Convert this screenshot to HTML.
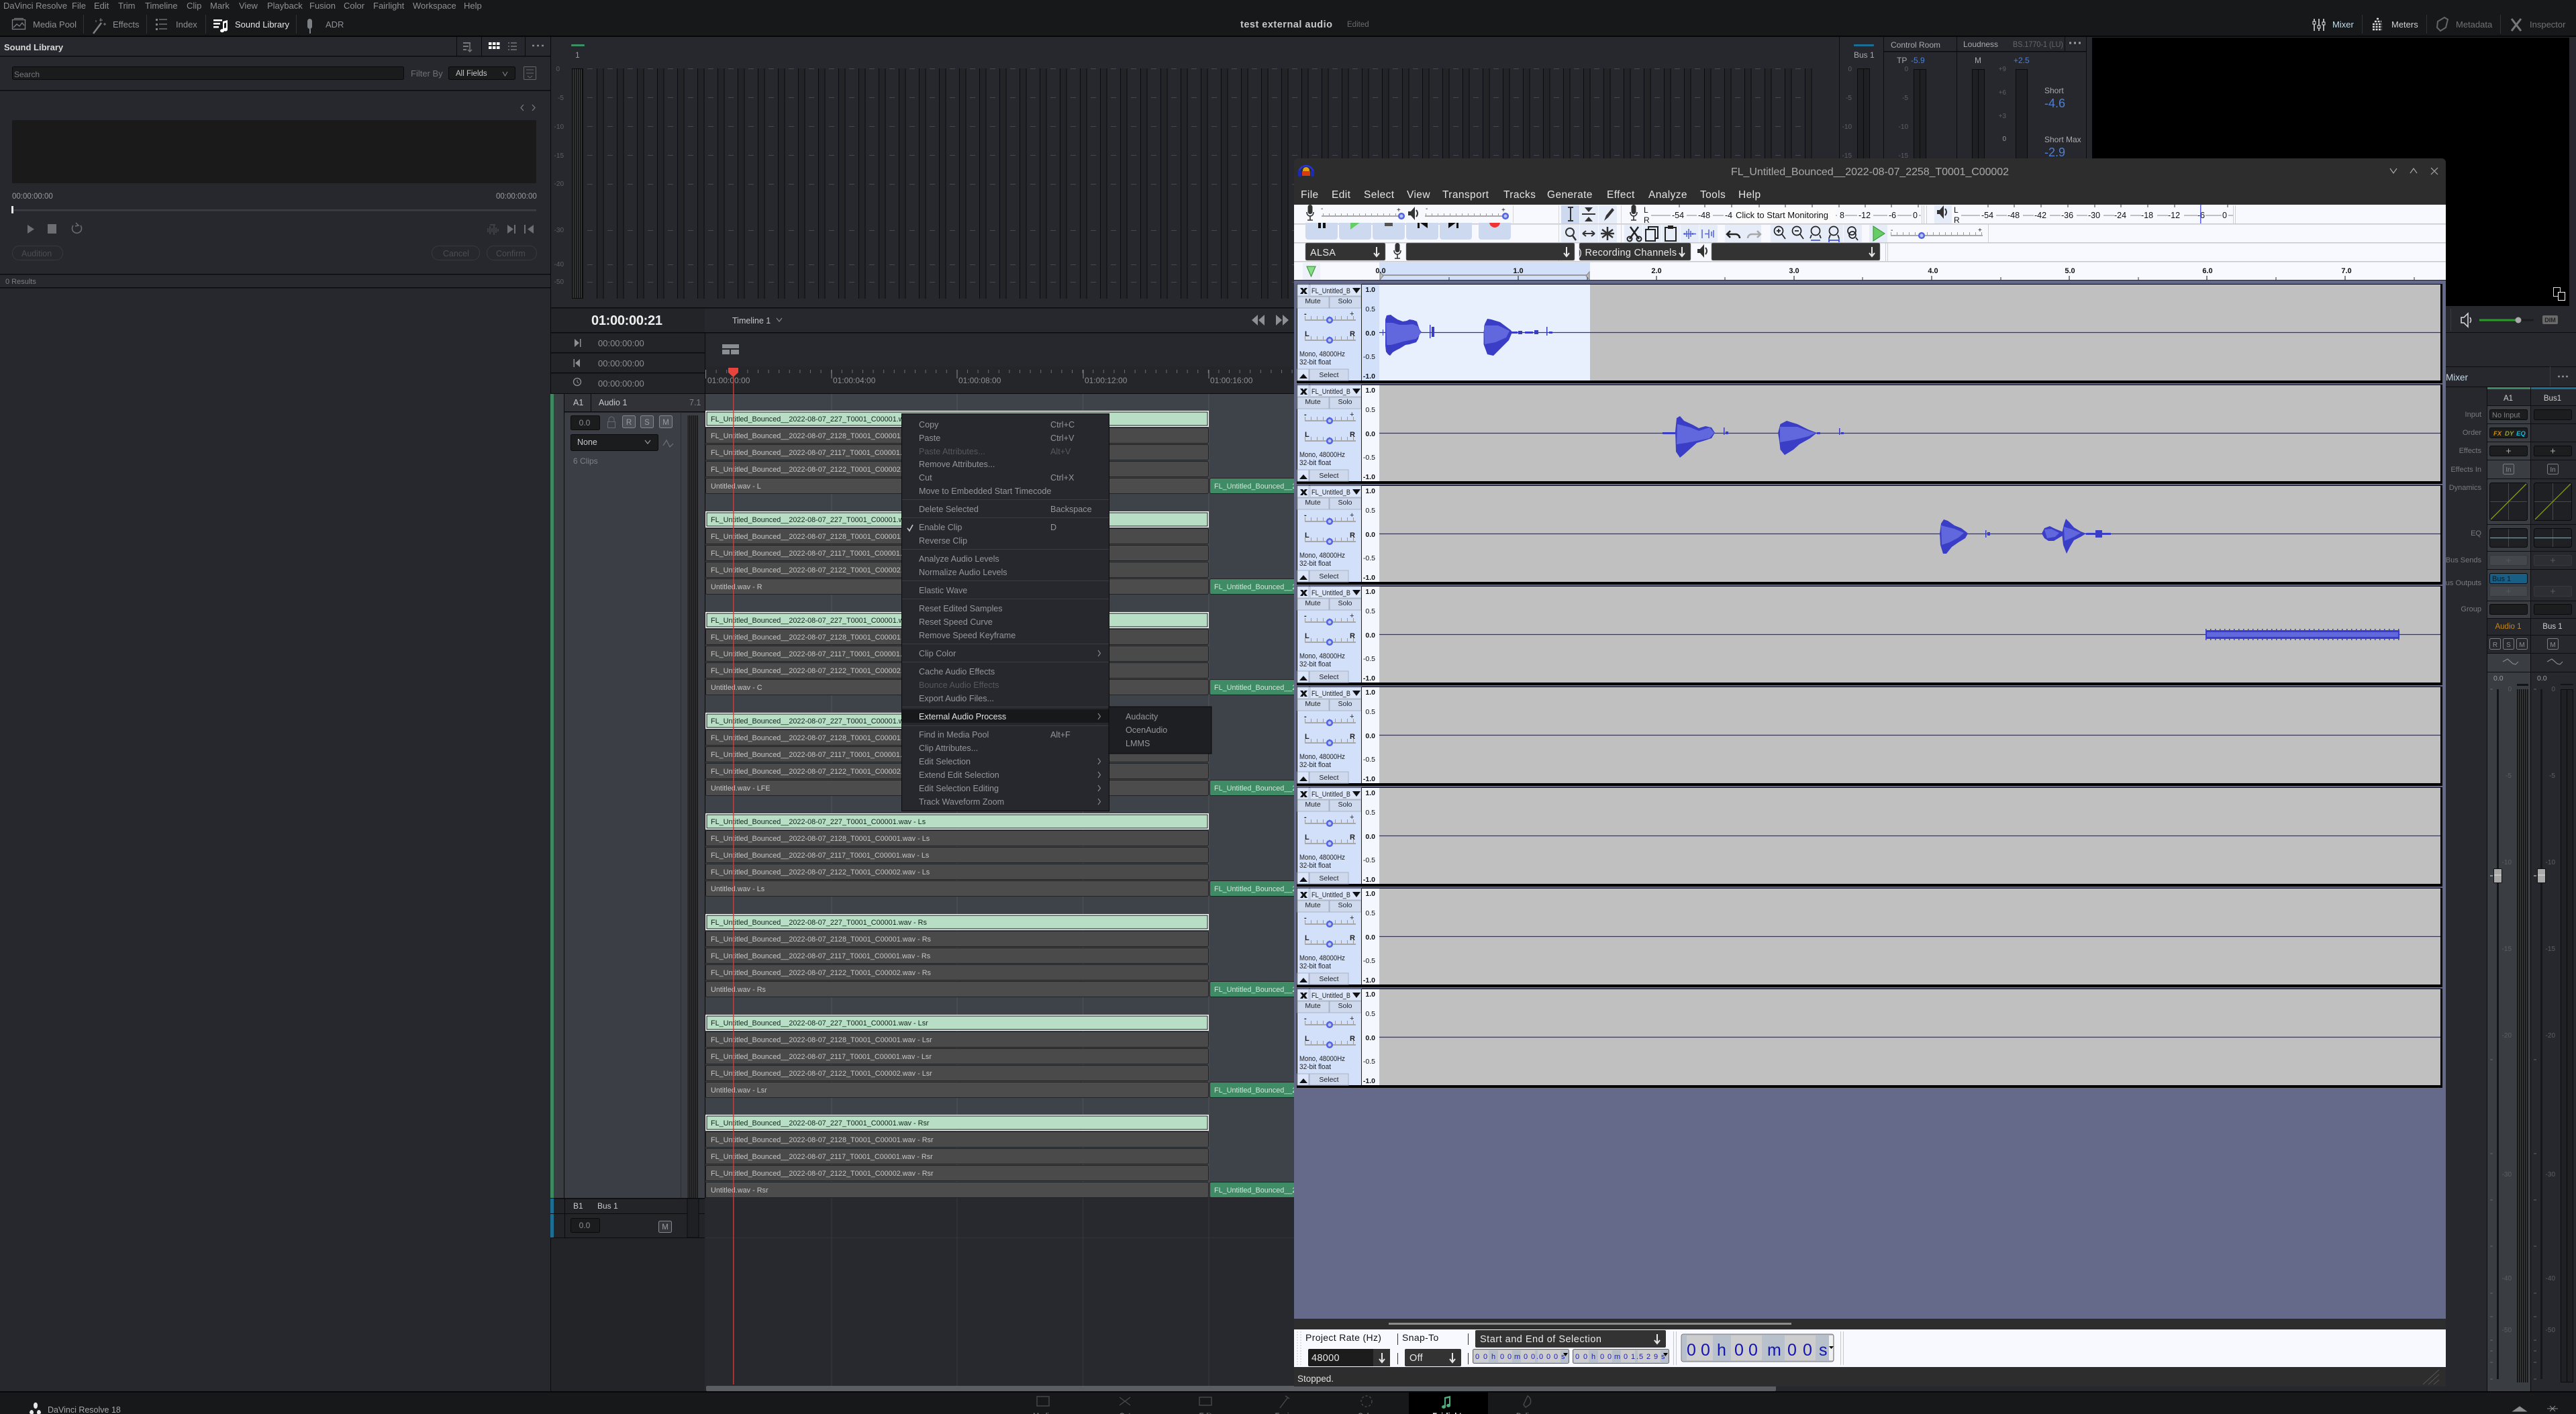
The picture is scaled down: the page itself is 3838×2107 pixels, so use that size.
<!DOCTYPE html>
<html><head><meta charset="utf-8"><title>Resolve Fairlight with Audacity</title>
<style>
html,body{margin:0;padding:0;width:3838px;height:2107px;overflow:hidden;background:#17181a}
svg{display:block}
text{font-family:"Liberation Sans",sans-serif;white-space:pre}
.m{font-size:13px;fill:#8d9094}
.t{font-size:13px;fill:#8d9094}
.w{fill:#e6e6e6}
.sm{font-size:11px;fill:#9b9da1}
.tc{font-size:13px;fill:#8c8f93}
.mt{font-size:10px;fill:#5d6065}
.cs{font-size:10.85px;fill:#10251a}
.cn{font-size:10.85px;fill:#c6c6c6}
.cg{font-size:10.85px;fill:#d0e8da}
.me{font-size:12.6px;fill:#94969a}
.md{font-size:12.6px;fill:#56585c}
.am{font-size:15.5px;fill:#e4e4e4;letter-spacing:.4px}
.mx{font-size:11px;fill:#777a7f;text-anchor:end}
.b{font-size:11.5px;fill:#cfcfcf;text-anchor:middle}
.ml{font-size:12.5px;fill:#111;letter-spacing:.3px}
.p{font-size:11px;fill:#222}
.pc{font-size:10.5px;fill:#222;text-anchor:middle}
.sc{font-size:10.5px;fill:#111;text-anchor:end}
.sb{font-size:10.5px;fill:#111;text-anchor:end;font-weight:bold}
.dd{font-size:14.5px;fill:#e8e8e8;letter-spacing:.3px}
.rl{font-size:11px;fill:#111;font-weight:bold;text-anchor:middle}
.d1{font-size:11px;fill:#1a1ab4}
.mb{font-size:14px;fill:#111;letter-spacing:.35px}
.gr{font-size:10px;fill:#5c5f63;text-anchor:end}
.nv{font-size:11px;fill:#8d9094;text-anchor:middle}
</style></head>
<body>
<svg xmlns="http://www.w3.org/2000/svg" width="3838" height="2107" viewBox="0 0 3838 2107">
<defs>
<pattern id="bars" patternUnits="userSpaceOnUse" x="889" y="0" width="30" height="2200"><rect x=".5" y="-5" width="9.5" height="3000" fill="#232428" stroke="#0b0b0c"/></pattern>
<pattern id="ticks" patternUnits="userSpaceOnUse" x="875" y="0" width="30" height="2200"><rect x="0" y="0" width="8" height="2200" fill="#46484c"/></pattern>
<pattern id="stripes" patternUnits="userSpaceOnUse" x="0" y="0" width="3" height="10"><rect width="3" height="10" fill="#38393b"/><rect width="1.4" height="10" fill="#0e0e0f"/></pattern>
<pattern id="rtick" patternUnits="userSpaceOnUse" x="1051" y="0" width="15.6" height="10"><rect width="1" height="10" fill="#6a6d72"/></pattern>
<pattern id="stk" patternUnits="userSpaceOnUse" x="0" y="0" width="9" height="4"><rect width="1" height="4" fill="#9a9a9a"/></pattern>
<g id="cgrp">
<rect x="1051" y="0" width="750" height="24" fill="#fff"/>
<rect x="1053" y="2" width="746" height="20" fill="#b8dfc6" stroke="#0f1a14"/>
<rect x="1051.5" y="25.5" width="749" height="23" rx="2" fill="#4a4a4a" stroke="#232325"/>
<rect x="1051.5" y="50.5" width="749" height="23" rx="2" fill="#4a4a4a" stroke="#232325"/>
<rect x="1051.5" y="75.5" width="749" height="23" rx="2" fill="#4a4a4a" stroke="#232325"/>
<rect x="1051.5" y="100.5" width="749" height="23" rx="2" fill="#4c4c4c" stroke="#232325"/>
<rect x="1802.5" y="100.5" width="140" height="23" rx="2" fill="#3e8b65" stroke="#232325"/>
</g>
<g id="mic"><rect x="-3.5" y="-11" width="7" height="14" rx="3.5" fill="#333"/><path d="M-5 0c0 8 10 8 10 0M0 5v7M-4 12h8" fill="none" stroke="#333" stroke-width="1.6"/></g>
<g id="spk"><path d="M-7-3h4l6-7v20l-6-7h-4z" fill="#333"/><path d="M5-5q4 5 0 10" fill="none" stroke="#333" stroke-width="2"/></g>
<g id="tpanel">
<rect x="1932" y="-1" width="1707" height="148" fill="#000"/>
<rect x="1933" y="0" width="95" height="143" fill="#d2e0f9"/>
<rect x="1933" y="0" width="17" height="17" fill="#dbe6fa" stroke="#b5bccb"/>
<rect x="1952" y="0" width="76" height="17" fill="#dbe6fa" stroke="#b5bccb"/>
<path d="M1937 5h4l1.500 2.500 1.500-2.500h4l-3.500 4.500 3.500 4.500h-4l-1.500-2.500-1.500 2.500h-4l3.500-4.500z" fill="#111"/>
<path d="M2015 5h12l-6 8z" fill="#111"/>
<rect x="1933" y="18" width="47" height="17" fill="#ced9ed" stroke="#aab3c5"/>
<rect x="1981" y="18" width="47" height="17" fill="#ced9ed" stroke="#aab3c5"/>
<rect x="1944" y="52" width="76" height="2" fill="#a8a8a8"/><rect x="1944" y="47" width="76" height="5" fill="url(#stk)"/>
<rect x="1944" y="82" width="76" height="2" fill="#a8a8a8"/><rect x="1944" y="77" width="76" height="5" fill="url(#stk)"/>
<circle cx="1981" cy="53" r="3.800" fill="#bcc6e8" stroke="#5466e4" stroke-width="2.600"/>
<circle cx="1981" cy="83" r="3.800" fill="#bcc6e8" stroke="#5466e4" stroke-width="2.600"/>
<rect x="1933" y="126" width="17" height="17" fill="#dbe6fa" stroke="#aab3c5"/>
<path d="M1936 140h12l-6-7z" fill="#111"/>
<rect x="1951" y="126" width="58" height="17" fill="#ced9ed" stroke="#aab3c5"/>
<rect x="2028" y="0" width="1" height="143" fill="#222"/>
<path d="M2050 36.500h5M2050 72.500h5M2050 107.500h5M2050 142.500h5" stroke="#333"/>
</g>
</defs>

<!-- base -->
<rect width="3838" height="2107" fill="#17181a"/>
<rect x="0" y="53" width="3838" height="2" fill="#070707"/>
<rect x="0" y="55" width="820" height="2019" fill="#27282d"/>
<rect x="820" y="55" width="3018" height="403" fill="#27282d"/>
<rect x="820" y="458" width="230" height="1616" fill="#232428"/>
<rect x="1050" y="458" width="2788" height="1616" fill="#27282d"/>
<rect x="0" y="2074" width="3838" height="33" fill="#17181a"/>
<rect x="0" y="2073" width="3838" height="2" fill="#08080a"/>

<!-- top menu -->
<g class="m">
<text x="5" y="13" class="m">DaVinci Resolve</text><text x="107" y="13" class="m">File</text><text x="140" y="13" class="m">Edit</text><text x="176" y="13" class="m">Trim</text><text x="216" y="13" class="m">Timeline</text><text x="278" y="13" class="m">Clip</text><text x="313" y="13" class="m">Mark</text><text x="356" y="13" class="m">View</text><text x="398" y="13" class="m">Playback</text><text x="461" y="13" class="m">Fusion</text><text x="512" y="13" class="m">Color</text><text x="556" y="13" class="m">Fairlight</text><text x="615" y="13" class="m">Workspace</text><text x="691" y="13" class="m">Help</text>
</g>
<g stroke="#303236"><path d="M124.500 22v28M218.500 22v28M306.500 22v28M441.500 22v28"/></g>
<text x="49" y="41" class="t">Media Pool</text><text x="168" y="41" class="t">Effects</text><text x="262" y="41" class="t">Index</text><text x="350" y="41" class="t w">Sound Library</text><text x="485" y="41" class="t">ADR</text>
<!-- toolbar icons -->
<g fill="none" stroke="#7d8085" stroke-width="1.300"><rect x="18.500" y="29.500" width="19" height="14"/><path d="M21 27.500h14M20 41l5-5 4 3 4-5 3 4"/><path d="M139 50l12-16" stroke-width="2.500"/><path d="M150 27v5M148 30h5M156 34v4M154 36h4M143 30v3" stroke-width="1"/><path d="M237 29h12M237 36h12M237 43h12"/></g>
<g fill="#7d8085"><rect x="232" y="28" width="3" height="3"/><rect x="232" y="35" width="3" height="3"/><rect x="232" y="42" width="3" height="3"/><rect x="458" y="28" width="7" height="15" rx="3.500"/><rect x="461" y="43" width="2" height="7"/></g>
<g fill="#fff"><rect x="318" y="29" width="13" height="2.500"/><rect x="318" y="34" width="10" height="2.500"/><rect x="318" y="39" width="8" height="2.500"/><path d="M332 32l7-2v14a3 2.500 0 1 1-2-2.300v-8l-3 1v11a3 2.500 0 1 1-2-2.300z"/></g>
<text x="1848" y="41" font-size="14.5" font-weight="bold" fill="#c8c9cc" textLength="137">test external audio</text>
<text x="2007" y="40" font-size="11.500" fill="#6a6c70">Edited</text>
<g stroke="#303236"><path d="M3519.500 22v28M3615.500 22v28M3725.500 22v28"/></g>
<g fill="none" stroke="#e6e6e6" stroke-width="1.500"><path d="M3448 28v18M3455 28v18M3462 28v18"/></g>
<g fill="#17181a" stroke="#e6e6e6"><rect x="3446" y="32" width="4" height="4"/><rect x="3453" y="38" width="4" height="4"/><rect x="3460" y="33" width="4" height="4"/></g>
<text x="3475" y="41" class="t" style="fill:#c4dcec">Mixer</text>
<path d="M3535 44h14M3535 40h14M3535 36h14M3538 32h10M3541 28h4" stroke="#ddd" stroke-width="2.500" stroke-dasharray="3 1.500"/>
<text x="3563" y="41" class="t" style="fill:#cfd2d6">Meters</text>
<path d="M3632 32l10-6 5 3-3 12-8 5-5-5z" fill="none" stroke="#666" stroke-width="2"/>
<text x="3659" y="41" class="t" style="fill:#707276">Metadata</text>
<path d="M3742 28l14 18M3756 28l-14 18" stroke="#777" stroke-width="3"/>
<text x="3769" y="41" class="t" style="fill:#707276">Inspector</text>

<!-- Sound library -->
<rect x="0" y="83" width="820" height="1.500" fill="#0b0b0d"/>
<path d="M680.500 55v28M717.500 55v28M782.500 55v28" stroke="#0b0b0d"/>
<text x="6" y="75" font-size="13" font-weight="bold" fill="#d8d9db">Sound Library</text>
<g fill="#777"><rect x="690" y="63" width="11" height="2"/><rect x="690" y="68" width="8" height="2"/><rect x="690" y="73" width="5" height="2"/></g><path d="M700 63v14m-3-3l3 3 3-3" stroke="#777" fill="none" stroke-width="1.500"/>
<g fill="#fff"><rect x="728" y="63" width="4.500" height="4"/><rect x="734" y="63" width="4.500" height="4"/><rect x="740" y="63" width="4.500" height="4"/><rect x="728" y="69" width="4.500" height="4"/><rect x="734" y="69" width="4.500" height="4"/><rect x="740" y="69" width="4.500" height="4"/></g>
<path d="M761 64h9M761 69h9M761 74h9" stroke="#777" stroke-width="1.500"/><path d="M757 64h2M757 69h2M757 74h2" stroke="#777" stroke-width="1.500"/>
<path d="M793 68h3M800 68h3M807 68h3" stroke="#888" stroke-width="2.500"/>
<rect x="18.500" y="99.500" width="583" height="19" rx="2" fill="#1a1b1d" stroke="#0a0a0b"/>
<text x="21" y="115" font-size="12" fill="#77797d">Search</text>
<text x="612" y="114" class="t" style="fill:#6f7175">Filter By</text>
<rect x="668.500" y="99.500" width="99" height="19" rx="2" fill="#1a1b1d" stroke="#0a0a0b"/>
<text x="679" y="113" font-size="11.500" fill="#c8c8c8">All Fields</text>
<path d="M749 107l3.500 6 3.500-6" fill="none" stroke="#888"/>
<rect x="780.500" y="99.500" width="18" height="19" fill="none" stroke="#666" rx="1"/><path d="M784 104h11M784 109h11M786 113l3.500 3 3.500-3" stroke="#666" fill="none"/>
<rect x="0" y="134" width="820" height="1.500" fill="#0b0b0d"/>
<path d="M780 156l-4 4.500 4 4.500M793 156l4 4.500-4 4.500" fill="none" stroke="#777" stroke-width="1.300"/>
<rect x="18" y="179" width="781" height="94" fill="#1a1a1b"/>
<text x="18" y="296" font-size="11.500" fill="#9a9ca0">00:00:00:00</text>
<text x="739" y="296" font-size="11.500" fill="#9a9ca0">00:00:00:00</text>
<rect x="18" y="312" width="781" height="2.500" fill="#3b3f45"/>
<rect x="17" y="307" width="3" height="11" fill="#e8e8e8"/>
<path d="M41 335l10 6.500-10 6.500z" fill="#6c6e72"/>
<rect x="71" y="334" width="13" height="14" fill="#6c6e72"/>
<path d="M109 336a7 7 0 1 0 11 0M113 332l4 4-5 1" fill="none" stroke="#6c6e72" stroke-width="1.500"/>
<path d="M727 340v6M730 337v12M733 340v6M736 336v14M739 339v8M742 341v4M730 335h8" stroke="#55575b"/>
<path d="M756 335l9 6.500-9 6.500zM766 335h2v13h-2z" fill="#6c6e72"/>
<path d="M795 335l-9 6.500 9 6.500zM781 335h2v13h-2z" fill="#6c6e72"/>
<g fill="none" stroke="#37393d"><rect x="18.500" y="366.500" width="75" height="21" rx="10"/><rect x="643.500" y="366.500" width="71" height="21" rx="10"/><rect x="725.500" y="366.500" width="74" height="21" rx="10"/></g>
<text x="32" y="382" font-size="12.500" fill="#4a4c50">Audition</text><text x="660" y="382" font-size="12.500" fill="#4a4c50">Cancel</text><text x="739" y="382" font-size="12.500" fill="#4a4c50">Confirm</text>
<rect x="0" y="408" width="820" height="1.500" fill="#0b0b0d"/>
<text x="8" y="423" font-size="11" fill="#7b7d81">0 Results</text>
<rect x="0" y="428" width="820" height="1.500" fill="#0b0b0d"/>
<rect x="820" y="55" width="1" height="2020" fill="#0b0b0d"/>

<!-- Meter bridge -->
<rect x="851" y="66" width="20" height="3" rx="1" fill="#3d9064"/>
<text x="857" y="86" font-size="12" fill="#9a9ca0">1</text>
<text x="834" y="106" class="gr">0</text><text x="840" y="149" class="gr">-5</text><text x="840" y="192" class="gr">-10</text><text x="840" y="235" class="gr">-15</text><text x="840" y="277" class="gr">-20</text><text x="840" y="346" class="gr">-30</text><text x="840" y="397" class="gr">-40</text><text x="840" y="423" class="gr">-50</text>
<rect x="852.500" y="102.500" width="16" height="342" fill="url(#stripes)" stroke="#0b0b0c"/>
<rect x="889" y="102" width="1811" height="343" fill="url(#bars)"/>
<g>
<rect x="875" y="102" width="1825" height="1" fill="url(#ticks)"/><rect x="875" y="145" width="1825" height="1" fill="url(#ticks)"/><rect x="875" y="188" width="1825" height="1" fill="url(#ticks)"/><rect x="875" y="231" width="1825" height="1" fill="url(#ticks)"/><rect x="875" y="274" width="1825" height="1" fill="url(#ticks)"/><rect x="875" y="343" width="1825" height="1" fill="url(#ticks)"/><rect x="875" y="394" width="1825" height="1" fill="url(#ticks)"/><rect x="875" y="420" width="1825" height="1" fill="url(#ticks)"/>
</g>
<path d="M2740.500 55v403M2806.500 55v403M2915.500 55v403M3108.500 55v403" stroke="#0d0d0f"/>
<rect x="2806" y="76" width="302" height="1.500" fill="#0b0b0d"/>
<path d="M3076.500 55v21" stroke="#0d0d0f"/>
<rect x="2762" y="66" width="30" height="3" rx="1" fill="#1c6f94"/>
<text x="2762" y="86" font-size="12" fill="#a8aaae">Bus 1</text>
<text x="2817" y="71" font-size="12" fill="#a8aaae">Control Room</text>
<text x="2925" y="70" font-size="12" fill="#a8aaae">Loudness</text>
<text x="2999" y="70" font-size="12" fill="#66686c" textLength="75" lengthAdjust="spacingAndGlyphs">BS.1770-1 (LU)</text>
<path d="M3083 64h3M3090 64h3M3097 64h3" stroke="#9a9ca0" stroke-width="3"/>
<text x="2826" y="94" font-size="12" fill="#a8aaae">TP</text><text x="2847" y="94" font-size="12" fill="#4f7fd0">-5.9</text>
<text x="2942" y="94" font-size="12" fill="#a8aaae">M</text><text x="3000" y="94" font-size="12" fill="#4f7fd0">+2.5</text>
<text x="2759" y="106" class="gr">0</text><text x="2759" y="149" class="gr">-5</text><text x="2759" y="192" class="gr">-10</text><text x="2759" y="235" class="gr">-15</text><text x="2843" y="106" class="gr">0</text><text x="2843" y="149" class="gr">-5</text><text x="2843" y="192" class="gr">-10</text><text x="2843" y="235" class="gr">-15</text><text x="2989" y="106" class="gr">+9</text><text x="2989" y="141" class="gr">+6</text><text x="2989" y="176" class="gr">+3</text><text x="2989" y="210" class="gr" style="fill:#9a9ca0">0</text>
<g fill="#1f2024" stroke="#0b0b0c"><rect x="2767.500" y="102.500" width="9" height="140"/><rect x="2776.500" y="102.500" width="9" height="140"/><rect x="2851.500" y="103.500" width="9" height="140"/><rect x="2860.500" y="103.500" width="9" height="140"/><rect x="2938.500" y="103.500" width="9" height="140"/><rect x="2947.500" y="103.500" width="9" height="140"/><rect x="3003.500" y="103.500" width="17" height="140"/></g>
<text x="3046" y="139" font-size="12" fill="#a8aaae">Short</text>
<text x="3046" y="160" font-size="18" fill="#4f7fd0">-4.6</text>
<text x="3046" y="212" font-size="12" fill="#a8aaae">Short Max</text>
<text x="3046" y="233" font-size="18" fill="#4f7fd0">-2.9</text>
<rect x="3117" y="56" width="711" height="400" fill="#000"/>
<rect x="3804.500" y="428.500" width="10" height="13" fill="#000" stroke="#ddd"/><rect x="3811.500" y="435.500" width="10" height="12" fill="#000" stroke="#fff"/>

<!-- Timecode / timeline head -->
<rect x="820" y="458" width="3018" height="1.500" fill="#0b0b0d"/>
<rect x="820" y="495" width="2788" height="1.500" fill="#0b0b0d"/>
<text x="881" y="484" font-size="20" font-weight="bold" fill="#f0f0f0" textLength="106">01:00:00:21</text>
<text x="1091" y="482" font-size="12.500" fill="#c4c6ca">Timeline 1</text>
<path d="M1157 474l4 5 4-5" fill="none" stroke="#888" stroke-width="1.200"/>
<path d="M1884 469l-9 8 9 8zM1874 469l-9 8 9 8zM1901 469l9 8-9 8zM1911 469l9 8-9 8z" fill="#8c8f93"/>
<rect x="1050" y="495" width="1" height="1290" fill="#0b0b0d"/>
<rect x="820" y="525" width="230" height="1.500" fill="#0b0b0d"/><rect x="820" y="555" width="230" height="1.500" fill="#0b0b0d"/><rect x="820" y="586" width="3018" height="1.500" fill="#0b0b0d"/>
<text x="891" y="516" class="tc">00:00:00:00</text><text x="891" y="546" class="tc">00:00:00:00</text><text x="891" y="576" class="tc">00:00:00:00</text>
<path d="M856 505l7 6-7 6zM864 505h1.500v12H864z" fill="#8c8f93"/>
<path d="M864 535l-7 6 7 6zM856 535h-1.500v12h1.500z" fill="#8c8f93"/>
<circle cx="860" cy="569" r="5.500" fill="none" stroke="#8c8f93" stroke-width="1.300"/><path d="M860 566v3l2 2" stroke="#8c8f93" fill="none"/>
<g fill="#8a8d91"><rect x="1076" y="513" width="25" height="6"/><rect x="1076" y="521" width="11" height="7"/><rect x="1089" y="521" width="12" height="7"/></g>
<path d="M1076 519.500h25" stroke="#222"/>
<rect x="1051" y="546" width="2787" height="40" fill="#25262a"/>
<rect x="1051" y="551" width="2787" height="5" fill="url(#rtick)"/>
<path d="M1051.500 551v13M1239 551v13M1426 551v13M1614 551v13M1801 551v13" stroke="#8a8d91"/>
<text x="1054" y="571" font-size="12" fill="#8c8f93">01:00:00:00</text><text x="1241" y="571" font-size="12" fill="#8c8f93">01:00:04:00</text><text x="1428" y="571" font-size="12" fill="#8c8f93">01:00:08:00</text><text x="1616" y="571" font-size="12" fill="#8c8f93">01:00:12:00</text><text x="1803" y="571" font-size="12" fill="#8c8f93">01:00:16:00</text>

<!-- Track header -->
<rect x="820" y="587" width="5" height="1198" fill="#3e8a5f"/>
<rect x="825" y="587" width="15" height="1198" fill="#3a3d42"/>
<rect x="840" y="587" width="1" height="1198" fill="#0b0b0d"/>
<rect x="841" y="587" width="209" height="1198" fill="#3b3e44"/>
<rect x="841" y="587" width="209" height="26" fill="#303237"/>
<rect x="841" y="613" width="209" height="1.500" fill="#0b0b0d"/>
<path d="M880.500 587v26" stroke="#0b0b0d"/>
<text x="854" y="604" font-size="12.500" fill="#c8c9cc">A1</text>
<text x="892" y="604" font-size="12.500" fill="#c8c9cc">Audio 1</text>
<text x="1027" y="604" font-size="12.500" fill="#7e8084">7.1</text>
<rect x="850.500" y="619.500" width="43" height="21" rx="2" fill="#1b1c1e" stroke="#0a0a0b"/>
<text x="871" y="634" font-size="12" fill="#8c8f93" text-anchor="middle">0.0</text>
<rect x="905.500" y="628.500" width="11" height="9" fill="none" stroke="#666a6f"/><path d="M907 628v-3a4 4 0 0 1 8 0v3" fill="none" stroke="#666a6f"/>
<g fill="#4d5056" stroke="#85888c"><rect x="927.500" y="619.500" width="19" height="18" rx="2"/><rect x="954.500" y="619.500" width="19" height="18" rx="2"/><rect x="982.500" y="619.500" width="19" height="18" rx="2"/></g>
<text x="937" y="633" class="b" style="fill:#9a9ca0">R</text><text x="964" y="633" class="b" style="fill:#9a9ca0">S</text><text x="992" y="633" class="b" style="fill:#9a9ca0">M</text>
<rect x="850.500" y="647.500" width="130" height="24" rx="2" fill="#1b1c1e" stroke="#0a0a0b"/>
<text x="860" y="663" font-size="12.500" fill="#c8c9cc">None</text>
<path d="M961 656l4 5 4-5" fill="none" stroke="#999" stroke-width="1.200"/>
<path d="M988 664l5-8 5 10 5-5" fill="none" stroke="#6a6d72" stroke-width="1.300"/>
<text x="854" y="691" font-size="12" fill="#7e8084">6 Clips</text>
<rect x="1014" y="614" width="1" height="1171" fill="#2a2c30"/>
<rect x="1024" y="619" width="17" height="1166" fill="url(#stripes)"/>
<rect x="820" y="1785" width="230" height="1.500" fill="#0b0b0d"/>
<rect x="820" y="1786" width="5" height="58" fill="#1c6f94"/>
<rect x="841" y="1786" width="1" height="58" fill="#0b0b0d"/>
<rect x="820" y="1808" width="230" height="1" fill="#0b0b0d"/><rect x="820" y="1844" width="230" height="1" fill="#0b0b0d"/>
<text x="854" y="1801" font-size="12" fill="#c8c9cc">B1</text><text x="890" y="1801" font-size="12" fill="#c8c9cc">Bus 1</text>
<rect x="850.500" y="1815.500" width="43" height="21" rx="2" fill="#1b1c1e" stroke="#0a0a0b"/>
<text x="871" y="1830" font-size="12" fill="#8c8f93" text-anchor="middle">0.0</text>
<rect x="981.500" y="1819.500" width="19" height="17" rx="2" fill="#33353a" stroke="#85888c"/><text x="991" y="1832" class="b" style="fill:#9a9ca0">M</text>
<rect x="1024" y="1786" width="17" height="58" fill="#1f2024" stroke="#0b0b0c"/>

<!-- timeline track bg -->
<rect x="1051" y="587" width="2787" height="1197" fill="#3e4249"/>
<rect x="1051" y="1785" width="2787" height="280" fill="#28292e"/>
<rect x="1051" y="1844" width="2787" height="1" fill="#323338"/>
<g stroke="#50545a"><path d="M1239 587v1197M1426 587v1197M1613.500 587v1197M1801 587v1197"/></g>
<g stroke="#37383d"><path d="M1239 1785v280M1426 1785v280M1613.500 1785v280M1801 1785v280"/></g>
<rect x="1052" y="2065" width="1594" height="8" rx="2" fill="#5a5d62"/>

<!-- clips -->
<use href="#cgrp" y="612"/><use href="#cgrp" y="762"/><use href="#cgrp" y="912"/><use href="#cgrp" y="1062"/><use href="#cgrp" y="1212"/><use href="#cgrp" y="1362"/><use href="#cgrp" y="1512"/><use href="#cgrp" y="1661"/>
<g>
<text x="1059" y="628" class="cs">FL_Untitled_Bounced__2022-08-07_227_T0001_C00001.wav - L</text><text x="1059" y="653" class="cn">FL_Untitled_Bounced__2022-08-07_2128_T0001_C00001.wav - L</text><text x="1059" y="678" class="cn">FL_Untitled_Bounced__2022-08-07_2117_T0001_C00001.wav - L</text><text x="1059" y="703" class="cn">FL_Untitled_Bounced__2022-08-07_2122_T0001_C00002.wav - L</text><text x="1059" y="728" class="cn">Untitled.wav - L</text><text x="1809" y="728" class="cg">FL_Untitled_Bounced__2</text>
<text x="1059" y="778" class="cs">FL_Untitled_Bounced__2022-08-07_227_T0001_C00001.wav - R</text><text x="1059" y="803" class="cn">FL_Untitled_Bounced__2022-08-07_2128_T0001_C00001.wav - R</text><text x="1059" y="828" class="cn">FL_Untitled_Bounced__2022-08-07_2117_T0001_C00001.wav - R</text><text x="1059" y="853" class="cn">FL_Untitled_Bounced__2022-08-07_2122_T0001_C00002.wav - R</text><text x="1059" y="878" class="cn">Untitled.wav - R</text><text x="1809" y="878" class="cg">FL_Untitled_Bounced__2</text>
<text x="1059" y="928" class="cs">FL_Untitled_Bounced__2022-08-07_227_T0001_C00001.wav - C</text><text x="1059" y="953" class="cn">FL_Untitled_Bounced__2022-08-07_2128_T0001_C00001.wav - C</text><text x="1059" y="978" class="cn">FL_Untitled_Bounced__2022-08-07_2117_T0001_C00001.wav - C</text><text x="1059" y="1003" class="cn">FL_Untitled_Bounced__2022-08-07_2122_T0001_C00002.wav - C</text><text x="1059" y="1028" class="cn">Untitled.wav - C</text><text x="1809" y="1028" class="cg">FL_Untitled_Bounced__2</text>
<text x="1059" y="1078" class="cs">FL_Untitled_Bounced__2022-08-07_227_T0001_C00001.wav - LFE</text><text x="1059" y="1103" class="cn">FL_Untitled_Bounced__2022-08-07_2128_T0001_C00001.wav - LFE</text><text x="1059" y="1128" class="cn">FL_Untitled_Bounced__2022-08-07_2117_T0001_C00001.wav - LFE</text><text x="1059" y="1153" class="cn">FL_Untitled_Bounced__2022-08-07_2122_T0001_C00002.wav - LFE</text><text x="1059" y="1178" class="cn">Untitled.wav - LFE</text><text x="1809" y="1178" class="cg">FL_Untitled_Bounced__2</text>
<text x="1059" y="1228" class="cs">FL_Untitled_Bounced__2022-08-07_227_T0001_C00001.wav - Ls</text><text x="1059" y="1253" class="cn">FL_Untitled_Bounced__2022-08-07_2128_T0001_C00001.wav - Ls</text><text x="1059" y="1278" class="cn">FL_Untitled_Bounced__2022-08-07_2117_T0001_C00001.wav - Ls</text><text x="1059" y="1303" class="cn">FL_Untitled_Bounced__2022-08-07_2122_T0001_C00002.wav - Ls</text><text x="1059" y="1328" class="cn">Untitled.wav - Ls</text><text x="1809" y="1328" class="cg">FL_Untitled_Bounced__2</text>
<text x="1059" y="1378" class="cs">FL_Untitled_Bounced__2022-08-07_227_T0001_C00001.wav - Rs</text><text x="1059" y="1403" class="cn">FL_Untitled_Bounced__2022-08-07_2128_T0001_C00001.wav - Rs</text><text x="1059" y="1428" class="cn">FL_Untitled_Bounced__2022-08-07_2117_T0001_C00001.wav - Rs</text><text x="1059" y="1453" class="cn">FL_Untitled_Bounced__2022-08-07_2122_T0001_C00002.wav - Rs</text><text x="1059" y="1478" class="cn">Untitled.wav - Rs</text><text x="1809" y="1478" class="cg">FL_Untitled_Bounced__2</text>
<text x="1059" y="1528" class="cs">FL_Untitled_Bounced__2022-08-07_227_T0001_C00001.wav - Lsr</text><text x="1059" y="1553" class="cn">FL_Untitled_Bounced__2022-08-07_2128_T0001_C00001.wav - Lsr</text><text x="1059" y="1578" class="cn">FL_Untitled_Bounced__2022-08-07_2117_T0001_C00001.wav - Lsr</text><text x="1059" y="1603" class="cn">FL_Untitled_Bounced__2022-08-07_2122_T0001_C00002.wav - Lsr</text><text x="1059" y="1628" class="cn">Untitled.wav - Lsr</text><text x="1809" y="1628" class="cg">FL_Untitled_Bounced__2</text>
<text x="1059" y="1677" class="cs">FL_Untitled_Bounced__2022-08-07_227_T0001_C00001.wav - Rsr</text><text x="1059" y="1702" class="cn">FL_Untitled_Bounced__2022-08-07_2128_T0001_C00001.wav - Rsr</text><text x="1059" y="1727" class="cn">FL_Untitled_Bounced__2022-08-07_2117_T0001_C00001.wav - Rsr</text><text x="1059" y="1752" class="cn">FL_Untitled_Bounced__2022-08-07_2122_T0001_C00002.wav - Rsr</text><text x="1059" y="1777" class="cn">Untitled.wav - Rsr</text><text x="1809" y="1777" class="cg">FL_Untitled_Bounced__2</text>
</g>
<!-- playhead -->
<rect x="1092" y="556" width="1.500" height="1507" fill="#c9443f" opacity=".85"/>
<path d="M1085 548h15v7l-7.500 7-7.500-7z" fill="#e8443e"/>

<!-- context menu -->
<rect x="1343.500" y="616.500" width="309" height="592" fill="#27282d" stroke="#0a0a0b"/>
<rect x="1344" y="1057" width="308" height="20" fill="#17181a"/>
<g stroke="#3a3b40"><path d="M1344 744.500h308M1344 771.500h308M1344 818.500h308M1344 865.500h308M1344 892.500h308M1344 959.500h308M1344 986.500h308M1344 1053.500h308M1344 1081.500h308"/></g>
<g>
<text x="1369" y="637" class="me">Copy</text><text x="1565" y="637" class="me">Ctrl+C</text>
<text x="1369" y="657" class="me">Paste</text><text x="1565" y="657" class="me">Ctrl+V</text>
<text x="1369" y="677" class="md">Paste Attributes...</text><text x="1565" y="677" class="md">Alt+V</text>
<text x="1369" y="696" class="me">Remove Attributes...</text>
<text x="1369" y="716" class="me">Cut</text><text x="1565" y="716" class="me">Ctrl+X</text>
<text x="1369" y="736" class="me">Move to Embedded Start Timecode</text>
<text x="1369" y="763" class="me">Delete Selected</text><text x="1565" y="763" class="me">Backspace</text>
<text x="1369" y="790" class="me">Enable Clip</text><text x="1565" y="790" class="me">D</text>
<text x="1369" y="810" class="me">Reverse Clip</text>
<text x="1369" y="837" class="me">Analyze Audio Levels</text>
<text x="1369" y="857" class="me">Normalize Audio Levels</text>
<text x="1369" y="884" class="me">Elastic Wave</text>
<text x="1369" y="911" class="me">Reset Edited Samples</text>
<text x="1369" y="931" class="me">Reset Speed Curve</text>
<text x="1369" y="951" class="me">Remove Speed Keyframe</text>
<text x="1369" y="978" class="me">Clip Color</text>
<text x="1369" y="1005" class="me">Cache Audio Effects</text>
<text x="1369" y="1025" class="md">Bounce Audio Effects</text>
<text x="1369" y="1045" class="me">Export Audio Files...</text>
<text x="1369" y="1072" class="me" style="fill:#e2e2e2">External Audio Process</text>
<text x="1369" y="1099" class="me">Find in Media Pool</text><text x="1565" y="1099" class="me">Alt+F</text>
<text x="1369" y="1119" class="me">Clip Attributes...</text>
<text x="1369" y="1139" class="me">Edit Selection</text>
<text x="1369" y="1159" class="me">Extend Edit Selection</text>
<text x="1369" y="1179" class="me">Edit Selection Editing</text>
<text x="1369" y="1199" class="me">Track Waveform Zoom</text>
</g>
<path d="M1352 787l3 4 5-9" fill="none" stroke="#c8c8c8" stroke-width="1.600"/>
<g fill="none" stroke="#8a8c90" stroke-width="1.100"><path d="M1636 969l3.500 4.500-3.500 4.500M1636 1063l3.500 4.500-3.500 4.500M1636 1130l3.500 4.500-3.500 4.500M1636 1150l3.500 4.500-3.500 4.500M1636 1170l3.500 4.500-3.500 4.500M1636 1190l3.500 4.500-3.500 4.500"/></g>
<rect x="1652" y="1053" width="153" height="70" fill="#1e1f22" stroke="#0a0a0b"/>
<text x="1677" y="1072" class="me">Audacity</text><text x="1677" y="1092" class="me">OcenAudio</text><text x="1677" y="1112" class="me">LMMS</text>

<!-- Right mixer -->
<rect x="3644" y="458" width="194" height="1616" fill="#27282d"/>
<rect x="3644" y="495" width="194" height="1" fill="#0d0d0f"/><rect x="3644" y="546" width="194" height="1" fill="#0d0d0f"/><rect x="3644" y="576" width="194" height="1" fill="#0d0d0f"/>
<path d="M3651.500 460v33M3799.500 546v30" stroke="#3a3b40"/>
<path d="M3667 473h4l6-6v20l-6-6h-4zM3680 473q3 4 0 8" fill="none" stroke="#ddd" stroke-width="1.500"/>
<rect x="3694" y="475.500" width="54" height="3" fill="#2a9d25"/><rect x="3748" y="475.500" width="27" height="3" fill="#1a1b1d"/><circle cx="3752" cy="477" r="4.500" fill="#aaa"/>
<rect x="3788" y="470" width="23" height="13" rx="2" fill="#6a6a6a"/><text x="3799.500" y="480" font-size="9" fill="#222" text-anchor="middle" font-weight="bold">DIM</text>
<text x="3644" y="567" font-size="13.500" fill="#c8dcec">Mixer</text>
<path d="M3811 561h3M3817 561h3M3823 561h3" stroke="#888" stroke-width="2.500"/>
<rect x="3706" y="577" width="64" height="1497" fill="#27282d"/>
<rect x="3706" y="577" width="64" height="3" fill="#3e8a64"/><rect x="3771" y="577" width="67" height="3" fill="#1c6f94"/>
<g fill="#3a3d42"><rect x="3706" y="604" width="64" height="317"/><rect x="3706" y="973" width="64" height="1100"/></g>
<g fill="none" stroke="#0e0e10"><path d="M3705.500 577v1497M3770.500 577v1497M3706 604.500h132M3706 631.500h132M3706 658.500h132M3706 685.500h132M3706 713.500h132M3706 781.500h132M3706 821.500h132M3706 848.500h132M3706 895.500h132M3706 921.500h132M3706 946.500h132M3706 973.500h132M3706 1001.500h132"/></g>
<text x="3697" y="621" class="mx">Input</text><text x="3697" y="648" class="mx">Order</text><text x="3697" y="675" class="mx">Effects</text><text x="3697" y="703" class="mx">Effects In</text><text x="3697" y="730" class="mx">Dynamics</text><text x="3697" y="798" class="mx">EQ</text><text x="3697" y="838" class="mx">Bus Sends</text><text x="3697" y="872" class="mx">Bus Outputs</text><text x="3697" y="911" class="mx">Group</text>
<text x="3737" y="597" class="b">A1</text><text x="3803" y="597" class="b">Bus1</text>
<g fill="#1c1d1f" stroke="#0a0a0b"><rect x="3709.500" y="610.500" width="56" height="15" rx="2"/><rect x="3775.500" y="610.500" width="56" height="15" rx="2"/><rect x="3709.500" y="637.500" width="56" height="15" rx="2"/><rect x="3709.500" y="664.500" width="56" height="15" rx="2"/><rect x="3775.500" y="664.500" width="56" height="15" rx="2"/><rect x="3709.500" y="900.500" width="56" height="15" rx="2"/><rect x="3775.500" y="900.500" width="56" height="15" rx="2"/></g>
<text x="3713" y="622" font-size="11" fill="#7e8084">No Input</text>
<text x="3715" y="649" font-size="9.500" font-weight="bold" font-style="italic" fill="#d28a00">FX</text><text x="3732" y="649" font-size="9.500" font-weight="bold" font-style="italic" fill="#9aa51e">DY</text><text x="3749" y="649" font-size="9.500" font-weight="bold" font-style="italic" fill="#18b6d6">EQ</text>
<path d="M3734 672h7M3737.500 668.500v7M3800 672h7M3803.500 668.500v7" stroke="#aaa"/>
<g fill="none" stroke="#7a7d82"><rect x="3729.500" y="691.500" width="16" height="15" rx="2"/><rect x="3795.500" y="691.500" width="16" height="15" rx="2"/></g>
<text x="3737.500" y="703" font-size="10" fill="#8a8d91" text-anchor="middle">In</text><text x="3803.500" y="703" font-size="10" fill="#8a8d91" text-anchor="middle">In</text>
<g fill="#1f2023" stroke="#0a0a0b"><rect x="3709.500" y="719.500" width="56" height="56" rx="3"/><rect x="3775.500" y="719.500" width="56" height="56" rx="3"/><rect x="3709.500" y="787.500" width="56" height="28" rx="3"/><rect x="3775.500" y="787.500" width="56" height="28" rx="3"/></g>
<path d="M3737.500 720v55M3710 747.500h55M3803.500 720v55M3776 747.500h55M3737.500 788v27M3803.500 788v27" stroke="#45474b"/>
<path d="M3711 774l53-53M3777 774l53-53" stroke="#8a9a1e" stroke-width="1.300"/>
<path d="M3710 801.500h55M3776 801.500h55" stroke="#3fb3c4" stroke-width="1.200"/>
<g fill="#44474c" stroke="#35373b"><rect x="3709.500" y="827.500" width="56" height="15" rx="2"/><rect x="3709.500" y="873.500" width="56" height="15" rx="2"/></g>
<g fill="#2d2e33" stroke="#36383c"><rect x="3775.500" y="827.500" width="56" height="15" rx="2"/><rect x="3775.500" y="873.500" width="56" height="15" rx="2"/></g>
<path d="M3734 835h7M3737.500 831.500v7M3800 835h7M3803.500 831.500v7M3734 881h7M3737.500 877.500v7M3800 881h7M3803.500 877.500v7" stroke="#55585c"/>
<rect x="3709.500" y="854.500" width="56" height="15" rx="2" fill="#195f85" stroke="#0a0a0b"/>
<text x="3713" y="866" font-size="11" fill="#0d1a22">Bus 1</text>
<text x="3737" y="937" font-size="11.500" text-anchor="middle" fill="#c2861e">Audio 1</text><text x="3803" y="937" class="b">Bus 1</text>
<g fill="none" stroke="#7a7d82"><rect x="3709.500" y="951.500" width="16" height="16" rx="2"/><rect x="3729.500" y="951.500" width="16" height="16" rx="2"/><rect x="3749.500" y="951.500" width="16" height="16" rx="2"/><rect x="3795.500" y="951.500" width="16" height="16" rx="2"/></g>
<text x="3717.500" y="964" font-size="10" fill="#8a8d91" text-anchor="middle">R</text><text x="3737.500" y="964" font-size="10" fill="#8a8d91" text-anchor="middle">S</text><text x="3757.500" y="964" font-size="10" fill="#8a8d91" text-anchor="middle">M</text><text x="3803.500" y="964" font-size="10" fill="#8a8d91" text-anchor="middle">M</text>
<path d="M3729 986l7-4 8 7 4 1 4-4M3795 986l7-4 8 7 4 1 4-4" fill="none" stroke="#85888c" stroke-width="1.200"/>
<text x="3715" y="1014" font-size="10.500" fill="#9a9ca0">0.0</text><text x="3780" y="1014" font-size="10.500" fill="#9a9ca0">0.0</text>
<rect x="3720" y="1027" width="3" height="1028" fill="#15161a"/><rect x="3785" y="1027" width="3" height="1028" fill="#15161a"/>
<g fill="#aaa" stroke="#111"><rect x="3715.500" y="1294.500" width="12" height="21" rx="1"/><rect x="3780.500" y="1294.500" width="12" height="21" rx="1"/></g>
<path d="M3716 1304h11M3781 1304h11M3710 1305h4M3775 1305h4" stroke="#e0e0e0"/>
<rect x="3750" y="1027" width="17" height="1033" fill="url(#stripes)"/>
<rect x="3750" y="1019" width="17" height="3" fill="#141416"/>
<g fill="#1f2024" stroke="#0b0b0c"><rect x="3815.500" y="1027.500" width="9" height="1032"/><rect x="3824.500" y="1027.500" width="9" height="1032"/></g>
<rect x="3815" y="1019" width="19" height="2" fill="#141416"/>
<text x="3742" y="1030" class="gr">0</text><text x="3742" y="1159" class="gr">-5</text><text x="3742" y="1288" class="gr">-10</text><text x="3742" y="1417" class="gr">-15</text><text x="3742" y="1546" class="gr">-20</text><text x="3742" y="1753" class="gr">-30</text><text x="3742" y="1908" class="gr">-40</text><text x="3742" y="1985" class="gr">-50</text><text x="3807" y="1030" class="gr">0</text><text x="3807" y="1159" class="gr">-5</text><text x="3807" y="1288" class="gr">-10</text><text x="3807" y="1417" class="gr">-15</text><text x="3807" y="1546" class="gr">-20</text><text x="3807" y="1753" class="gr">-30</text><text x="3807" y="1908" class="gr">-40</text><text x="3807" y="1985" class="gr">-50</text>
<path d="M3710 1027h4M3710 1579h4M3710 1719h4M3710 1788h4M3710 1857h4M3710 1927h4M3710 1962h4M3710 1997h4M3710 2013h4M3710 2030h4M3710 2055h4M3775 1027h4M3775 1579h4M3775 1719h4M3775 1788h4M3775 1857h4M3775 1927h4M3775 1962h4M3775 1997h4M3775 2013h4M3775 2030h4M3775 2055h4" stroke="#666"/>
<rect x="3644" y="2073" width="194" height="2" fill="#08080a"/>

<!-- Bottom nav -->
<rect x="2099" y="2075" width="118" height="32" fill="#000"/>
<g transform="translate(44 2090)"><path d="M9 0a2.500 4 0 0 1 3 4c0 3-1 5-3 5s-3-2-3-5a2.500 4 0 0 1 3-4zM3 11c2 0 3 2 3 4s-1 2-3 2-3-1-3-2 1-4 3-4zM14 11c2 0 3 3 3 4s-1 2-3 2-3 0-3-2 1-4 3-4z" fill="#e8e8e8"/></g>
<text x="71" y="2105" font-size="12.500" fill="#a8a8a8">DaVinci Resolve 18</text>
<g fill="none" stroke="#47494d" stroke-width="1.400"><rect x="1545" y="2081" width="18" height="14"/><path d="M1668 2082l16 12M1684 2082l-16 12"/><rect x="1787" y="2082" width="18" height="12"/><path d="M1907 2098l12-16M1915 2080l6 4"/><circle cx="2036" cy="2088" r="8" stroke-dasharray="3 3"/><path d="M2276 2080c5 3 6 9 3 13l-6 4-3-4z"/></g>
<path d="M2152 2082l9-2v14a3 2.500 0 1 1-2-2v-9l-5 1v12a3 2.500 0 1 1-2-2z" fill="#4fae7e"/>
<path d="M3744 2103l10-7 10 7z M3795 2099h16M3799 2095l8 8M3807 2095l-8 8" fill="#8a8c90" stroke="#8a8c90"/>
<text x="1554" y="2113" class="nv">Media</text><text x="1676" y="2113" class="nv">Cut</text><text x="1796" y="2113" class="nv">Edit</text><text x="1916" y="2113" class="nv">Fusion</text><text x="2036" y="2113" class="nv">Color</text><text x="2156" y="2113" class="nv" style="fill:#fff;font-weight:bold">Fairlight</text><text x="2276" y="2113" class="nv">Deliver</text>

<!-- Audacity window -->
<path d="M1928 2066V242a6 6 0 0 1 6-6h1704a6 6 0 0 1 6 6v1824z" fill="#2d2d2d"/>
<path d="M1935 258a11 11 0 0 1 22 0" fill="none" stroke="#2135d8" stroke-width="2.500"/><rect x="1934" y="254" width="5" height="9" rx="2" fill="#1c2bb5"/><rect x="1953" y="254" width="5" height="9" rx="2" fill="#1c2bb5"/><circle cx="1946" cy="254" r="5" fill="#e8a010"/><rect x="1940" y="255" width="12" height="7" fill="#d83a12"/>
<text x="2579" y="261" font-size="16" fill="#a9a9a9" textLength="414">FL_Untitled_Bounced__2022-08-07_2258_T0001_C00002</text>
<path d="M3561 251l5 7 5-7M3591 258l5-7 5 7M3622 250l10 10M3632 250l-10 10" fill="none" stroke="#a9a9a9" stroke-width="1.200"/>
<text x="1938" y="295" class="am">File</text><text x="1984" y="295" class="am">Edit</text><text x="2032" y="295" class="am">Select</text><text x="2096" y="295" class="am">View</text><text x="2149" y="295" class="am">Transport</text><text x="2240" y="295" class="am">Tracks</text><text x="2305" y="295" class="am">Generate</text><text x="2394" y="295" class="am">Effect</text><text x="2456" y="295" class="am">Analyze</text><text x="2533" y="295" class="am">Tools</text><text x="2590" y="295" class="am">Help</text>

<rect x="1928" y="305" width="1716" height="113" fill="#f8f9ff"/>
<rect x="1928" y="333" width="1716" height="1.500" fill="#c8c8c8"/><rect x="1928" y="361" width="1716" height="1.500" fill="#c8c8c8"/><rect x="1928" y="389" width="1716" height="1.500" fill="#c8c8c8"/>
<!-- transport -->
<g fill="#ccd9ef"><rect x="1945" y="320" width="48" height="37" rx="4"/><rect x="1995" y="320" width="48" height="37" rx="4"/><rect x="2045" y="320" width="48" height="37" rx="4"/><rect x="2095" y="320" width="48" height="37" rx="4"/><rect x="2145" y="320" width="48" height="37" rx="4"/><rect x="2203" y="320" width="48" height="37" rx="4"/></g>
<rect x="1964" y="325" width="4" height="15" fill="#111"/><rect x="1971" y="325" width="4" height="15" fill="#111"/>
<path d="M2012 342l15-11v-8h-15z" fill="#66cc66"/>
<rect x="2063" y="325" width="12" height="12" fill="#555"/>
<path d="M2112 325h3v15h-3zM2116 332l11-7v15z" fill="#111"/><path d="M2170 325h3v15h-3zM2169 332l-11-7v15z" fill="#111"/>
<circle cx="2227" cy="331" r="8" fill="#e33"/>
<rect x="1928" y="305" width="326" height="27" fill="#f8f9ff"/>
<path d="M2254.500 306v26" stroke="#d6d6d6"/>
<use href="#mic" x="1952" y="316"/>
<text x="1968" y="314" font-size="10" fill="#111">-</text><text x="2081" y="316" font-size="10" fill="#111">+</text>
<rect x="1969" y="321" width="119" height="2" fill="#a8a8a8"/><rect x="1969" y="318" width="119" height="3" fill="url(#stk)"/>
<circle cx="2088" cy="322" r="3.800" fill="#bcc6e8" stroke="#5466e4" stroke-width="2.600"/>
<use href="#spk" x="2105" y="318"/>
<text x="2124" y="314" font-size="10" fill="#111">-</text><text x="2237" y="316" font-size="10" fill="#111">+</text>
<rect x="2123" y="321" width="120" height="2" fill="#a8a8a8"/><rect x="2123" y="318" width="120" height="3" fill="url(#stk)"/>
<circle cx="2243" cy="322" r="3.800" fill="#bcc6e8" stroke="#5466e4" stroke-width="2.600"/>
<!-- tools -->
<path d="M2322.500 306v83M2326.500 306v83M2415.500 306v55" stroke="#d8d8d8"/>
<rect x="2326" y="306" width="27" height="27" fill="#ccd9ef"/>
<g fill="#e6ecf8"><rect x="2354" y="306" width="27" height="27"/><rect x="2382" y="306" width="27" height="27"/><rect x="2326" y="335" width="27" height="26"/><rect x="2354" y="335" width="27" height="26"/><rect x="2382" y="335" width="27" height="26"/><rect x="2420" y="335" width="27" height="26"/><rect x="2448" y="335" width="27" height="26"/><rect x="2476" y="335" width="27" height="26"/><rect x="2504" y="335" width="27" height="26"/><rect x="2532" y="335" width="27" height="26"/><rect x="2570" y="335" width="27" height="26"/><rect x="2597" y="335" width="27" height="26"/><rect x="2638" y="335" width="27" height="26"/><rect x="2665" y="335" width="27" height="26"/><rect x="2692" y="335" width="27" height="26"/><rect x="2719" y="335" width="27" height="26"/><rect x="2747" y="335" width="27" height="26"/><rect x="2785" y="335" width="27" height="26"/></g>
<path d="M2336 309h8M2336 329h8M2340 309v20" fill="none" stroke="#333" stroke-width="2"/>
<path d="M2361 309h12l-6 7zM2361 330h12l-6-7zM2357 318h20v2h-20z" fill="#333"/>
<path d="M2390 329l3-8 9-11 3 3-9 11z" fill="#333"/>
<circle cx="2339" cy="346" r="6" fill="none" stroke="#333" stroke-width="2"/><path d="M2343 351l5 7" stroke="#333" stroke-width="2.500"/>
<path d="M2358 348h18M2358 348l5-4M2358 348l5 4M2376 348l-5-4M2376 348l-5 4" fill="none" stroke="#333" stroke-width="2"/>
<path d="M2395 338v20M2387 342l16 12M2403 342l-16 12M2385 348h20" stroke="#333" stroke-width="2.500"/>
<!-- edit -->
<path d="M2429 338l13 18M2441 338l-13 18" stroke="#222" stroke-width="2.500"/><circle cx="2428" cy="356" r="3.500" fill="none" stroke="#222" stroke-width="2"/><circle cx="2442" cy="356" r="3.500" fill="none" stroke="#222" stroke-width="2"/>
<rect x="2456" y="338" width="14" height="17" fill="none" stroke="#222" stroke-width="2"/><rect x="2452" y="342" width="14" height="17" fill="#e6ecf8" stroke="#222" stroke-width="2"/>
<rect x="2481" y="339" width="16" height="20" fill="none" stroke="#222" stroke-width="2"/><rect x="2485" y="336" width="8" height="5" fill="#222"/>
<path d="M2510 347v3M2513 344v9M2516 341v15M2519 344v9M2522 347v3M2508 348.500h19" stroke="#5060d0" stroke-width="1.500"/>
<path d="M2536 342v13M2546 342v13M2550 345v7M2553 343v11M2540 348.500h6" stroke="#5060d0" stroke-width="1.500"/>
<path d="M2578 344l-5 5 5 5M2574 349h12a6 6 0 0 1 6 6" fill="none" stroke="#222" stroke-width="2.500"/>
<path d="M2618 344l5 5-5 5M2622 349h-12a6 6 0 0 0-6 6" fill="none" stroke="#a8a8a8" stroke-width="2.500"/>
<g fill="none" stroke="#222" stroke-width="1.700"><circle cx="2650" cy="344" r="6.500"/><path d="M2655 349l5 7M2647 344h6M2650 341v6"/><circle cx="2677" cy="344" r="6.500"/><path d="M2682 349l5 7M2674 344h6"/><circle cx="2705" cy="344" r="6.500"/><path d="M2699 350l-2 5M2711 350l2 5"/><circle cx="2732" cy="344" r="6.500"/><path d="M2727 350l-2 5M2738 350l2 5"/><circle cx="2759" cy="344" r="6"/><circle cx="2760" cy="350" r="5"/><path d="M2765 354l3 4"/></g>
<path d="M2698 358h14M2725 358h15M2725 355v6M2740 355v6" stroke="#2a3cd0" stroke-width="1.500"/>
<path d="M2791 337v22l17-11z" fill="#66cc66" stroke="#2e8f2e"/>
<text x="2817" y="346" font-size="10" fill="#111">-</text><text x="2947" y="346" font-size="10" fill="#111">+</text>
<rect x="2817" y="350" width="137" height="2" fill="#a8a8a8"/><rect x="2817" y="346" width="137" height="4" fill="url(#stk)"/>
<circle cx="2863" cy="351" r="3.800" fill="#bcc6e8" stroke="#5466e4" stroke-width="2.600"/>
<path d="M2962.500 334v27" stroke="#d0d0d0"/>
<!-- meters -->
<use href="#mic" x="2434" y="316"/>
<text x="2449" y="317" font-size="12" fill="#111">L</text><text x="2449" y="332" font-size="12" fill="#111">R</text>
<path d="M2460 321h124M2735 321h127" stroke="#888"/>
<path d="M2502 305v4M2540 305v4M2580 305v4M2621 305v4M2660 305v4M2700 305v4M2740 305v4M2779 305v4M2818 305v4M2858 305v4" stroke="#333"/>
<rect x="2489" y="313" width="24" height="15" fill="#f8f9ff"/><rect x="2528" y="313" width="24" height="15" fill="#f8f9ff"/><rect x="2568" y="313" width="15" height="15" fill="#f8f9ff"/>
<text x="2491" y="325" font-size="12.500" fill="#111">-54</text><text x="2530" y="325" font-size="12.500" fill="#111">-48</text><text x="2570" y="325" font-size="12.500" fill="#111">-4</text><rect x="2583" y="309" width="152" height="22" fill="#fbfbfb"/><text x="2586" y="325" fill="#111" font-size="13">Click to Start Monitoring</text><rect x="2737" y="313" width="12" height="15" fill="#f8f9ff"/><rect x="2767" y="313" width="24" height="15" fill="#f8f9ff"/><rect x="2812" y="313" width="15" height="15" fill="#f8f9ff"/><rect x="2848" y="313" width="11" height="15" fill="#f8f9ff"/><text x="2741" y="325" font-size="12.500" fill="#111">8</text><text x="2769" y="325" font-size="12.500" fill="#111">-12</text><text x="2814" y="325" font-size="12.500" fill="#111">-6</text><text x="2850" y="325" font-size="12.500" fill="#111">0</text>
<path d="M2863.500 306v27M2866.500 306v27M2870.500 306v27" stroke="#d0d0d0"/>
<rect x="2882" y="306" width="26" height="27" fill="#e6ecf8"/>
<use href="#spk" x="2893" y="316"/>
<text x="2911" y="317" font-size="12" fill="#111">L</text><text x="2911" y="332" font-size="12" fill="#111">R</text>
<path d="M2922 321h405" stroke="#888"/>
<path d="M2962 305v4M3001 305v4M3041 305v4M3081 305v4M3121 305v4M3160 305v4M3200 305v4M3240 305v4M3279 305v4M3319 305v4" stroke="#333"/>
<rect x="2950" y="314" width="24" height="14" fill="#f8f9ff"/><rect x="2990" y="314" width="24" height="14" fill="#f8f9ff"/><rect x="3030" y="314" width="24" height="14" fill="#f8f9ff"/><rect x="3070" y="314" width="24" height="14" fill="#f8f9ff"/><rect x="3110" y="314" width="24" height="14" fill="#f8f9ff"/><rect x="3150" y="314" width="24" height="14" fill="#f8f9ff"/><rect x="3190" y="314" width="24" height="14" fill="#f8f9ff"/><rect x="3230" y="314" width="24" height="14" fill="#f8f9ff"/><rect x="3274" y="314" width="12" height="14" fill="#f8f9ff"/><rect x="3310" y="314" width="10" height="14" fill="#f8f9ff"/>
<text x="2952" y="325" font-size="12.500" fill="#111">-54</text><text x="2991" y="325" font-size="12.500" fill="#111">-48</text><text x="3031" y="325" font-size="12.500" fill="#111">-42</text><text x="3071" y="325" font-size="12.500" fill="#111">-36</text><text x="3111" y="325" font-size="12.500" fill="#111">-30</text><text x="3150" y="325" font-size="12.500" fill="#111">-24</text><text x="3190" y="325" font-size="12.500" fill="#111">-18</text><text x="3230" y="325" font-size="12.500" fill="#111">-12</text><text x="3274" y="325" font-size="12.500" fill="#111">-6</text><text x="3311" y="325" font-size="12.500" fill="#111">0</text>
<rect x="3278" y="306" width="1.500" height="27" fill="#5a5ae8"/>
<path d="M3327.500 306v27M3330.500 306v27" stroke="#d0d0d0"/>
<!-- device row -->
<g fill="#333" stroke="#888" stroke-width=".5"><rect x="1945" y="362" width="119" height="26" rx="2"/><rect x="2095" y="362" width="251" height="26" rx="2"/><rect x="2353" y="362" width="166" height="26" rx="2"/><rect x="2550" y="362" width="251" height="26" rx="2"/></g>
<text x="1952" y="381" class="dd">ALSA</text>
<text x="2352" y="381" class="dd">) Recording Channels</text>
<g fill="none" stroke="#e8e8e8" stroke-width="2"><path d="M2051 368v14m-4-5l4 5 4-5M2334 368v14m-4-5l4 5 4-5M2506 368v14m-4-5l4 5 4-5M2789 368v14m-4-5l4 5 4-5"/></g>
<use href="#mic" x="2082" y="373"/><use href="#spk" x="2536" y="374"/>
<path d="M2809.500 362v27M2812.500 362v27" stroke="#d0d0d0"/>
<!-- ruler -->
<rect x="1928" y="391" width="1716" height="26" fill="#f8f9ff"/>
<rect x="2055" y="391" width="314" height="26" fill="#d2e0f9"/>
<rect x="1941" y="392" width="26" height="25" fill="#eef1fa"/>
<path d="M1947 397h13l-6.500 15z" fill="#88dd88" stroke="#2e8f2e"/>
<rect x="2057" y="409" width="308" height="2" fill="#9a9a9a"/>
<path d="M2056 405v12l5-6zM2368 405v12l-5-6z" fill="#bbb" stroke="#888"/>
<text x="2057" y="407" class="rl">0.0</text><text x="2262" y="407" class="rl">1.0</text><text x="2468" y="407" class="rl">2.0</text><text x="2673" y="407" class="rl">3.0</text><text x="2880" y="407" class="rl">4.0</text><text x="3084" y="407" class="rl">5.0</text><text x="3289" y="407" class="rl">6.0</text><text x="3496" y="407" class="rl">7.0</text>
<path d="M2262 411v6M2468 411v6M2673 411v6M2878 411v6M3083 411v6M3288 411v6M3494 411v6" stroke="#111"/>
<path d="M2159 413v4M2365 413v4M2570 413v4M2775 413v4M2981 413v4M3186 413v4M3391 413v4M3597 413v4" stroke="#333"/>
<rect x="1928" y="417" width="1716" height="1" fill="#222"/>
<!-- track area -->
<rect x="1928" y="418" width="1716" height="1547" fill="#666a8a"/>

<use href="#tpanel" y="424"/><use href="#tpanel" y="574"/><use href="#tpanel" y="724"/><use href="#tpanel" y="874"/><use href="#tpanel" y="1024"/><use href="#tpanel" y="1174"/><use href="#tpanel" y="1324"/><use href="#tpanel" y="1474"/>
<rect x="2029" y="424" width="26" height="143" fill="#d2e0f9"/>
<rect x="2029" y="574" width="26" height="143" fill="#f5f7ff"/><rect x="2029" y="724" width="26" height="143" fill="#f5f7ff"/><rect x="2029" y="874" width="26" height="143" fill="#f5f7ff"/><rect x="2029" y="1024" width="26" height="143" fill="#f5f7ff"/><rect x="2029" y="1174" width="26" height="143" fill="#f5f7ff"/><rect x="2029" y="1324" width="26" height="143" fill="#f5f7ff"/><rect x="2029" y="1474" width="26" height="143" fill="#f5f7ff"/>
<rect x="2055" y="424" width="1581" height="143" fill="#c0c0c0"/><rect x="2055" y="424" width="314" height="143" fill="#e8f0fe"/>
<rect x="2055" y="574" width="1581" height="143" fill="#c0c0c0"/><rect x="2055" y="724" width="1581" height="143" fill="#c0c0c0"/><rect x="2055" y="874" width="1581" height="143" fill="#c0c0c0"/><rect x="2055" y="1024" width="1581" height="143" fill="#c0c0c0"/><rect x="2055" y="1174" width="1581" height="143" fill="#c0c0c0"/><rect x="2055" y="1324" width="1581" height="143" fill="#c0c0c0"/><rect x="2055" y="1474" width="1581" height="143" fill="#c0c0c0"/>
<path d="M2055 495.500h1581M2055 645.500h1581M2055 795.500h1581M2055 945.500h1581M2055 1095.500h1581M2055 1245.500h1581M2055 1395.500h1581M2055 1545.500h1581" stroke="#2c2cae" stroke-width="1.200"/>

<!-- waveforms: peaks -->
<g fill="#3a3ec6">
<path d="M2064 476L2066 470 2072 469 2076 472 2082 476 2090 479 2096 478 2100 476 2106 477 2111 479 2113 485 2115 491 2118 495 2115 498 2113 505 2110 510 2100 513 2094 514 2086 519 2080 522 2075 525 2071 530 2068 528 2065 524 2064 515z"/>
<path d="M2130 484h1.500v20h-1.500zM2133 487h4v15h-4zM2060 491h1v9h-1z"/>
<path d="M2210.500 495L2212 483 2216 475 2222 476 2235 480 2243 486 2251 492 2253 495 2248 507 2235 520 2225 530 2216 528 2210.500 513z"/>
<path d="M2252 494h9v3h-9zM2262 493h6v5h-6zM2272 494h12v3h-12zM2286 492h6v6h-6zM2304 487h1.500v13h-1.500zM2308 494h5v3h-5z"/>
<path d="M2477 644h19v3h-19zM2496 643L2498 623 2503 620 2509 627 2522 633 2531 638 2541 635 2550 637 2555 645 2550 653 2538 657 2528 660 2519 668 2509 677 2503 682 2497 673z"/>
<path d="M2568 637h1.500v11h-1.500zM2571 643h4v4h-4z"/>
<path d="M2649 645L2652.500 632 2662 627 2678 632 2694 640 2707 645 2697 653 2681 662 2672 670 2659 678 2652.500 670 2651 657z"/>
<path d="M2707 644h5v3h-5zM2740 638h1.500v10h-1.500zM2743 644h4v3h-4z"/>
<path d="M2890 795L2892 780 2896 774 2902 776 2912 783 2922 787 2930 793 2932 795 2928 802 2918 808 2908 815 2900 825 2895 825 2891 812z"/>
<path d="M2958 790h1.500v11h-1.500zM2961 793h4v5h-4z"/>
<path d="M3042 795L3046 787 3054 784 3062 788 3072 792 3078 795 3070 800 3060 806 3052 806 3046 802z"/>
<path d="M3072 795L3075 782 3078 773 3083 778 3090 786 3100 792 3108 795 3100 800 3090 805 3084 815 3079 825 3074 812z"/>
<path d="M3108 794h14v3h-14zM3122 790h10v11h-10zM3132 794h13v3h-13z"/>
<rect x="3286" y="939" width="289" height="13" />
</g>
<path d="M3286 945.500h289" stroke="#3a3ec6" stroke-width="17" stroke-dasharray="1.500 5.500"/>
<g fill="#6167dc">
<path d="M2065 481L2075 481 2085 484 2095 484 2105 483 2112 486 2115 492 2117 495 2115 499 2110 505 2100 507 2090 509 2080 512 2072 514 2066 514z"/>
<path d="M2211 485L2232 485 2249 493 2244 503 2228 510 2212 513z"/>
<path d="M2499 632L2519 637 2531 642 2547 637 2554 645 2547 653 2528 657 2512 660 2498 662z"/>
<path d="M2652 636L2678 636 2694 642 2705 645 2695 650 2675 655 2652 659z"/>
<path d="M2892 783L2912 788 2926 794 2918 801 2905 808 2893 812z"/>
<path d="M3046 789L3056 788 3068 794 3062 800 3050 802z"/>
<path d="M3075 785L3085 788 3100 794 3090 800 3076 806z"/>
<rect x="3288" y="942" width="285" height="7"/>
</g>

<!-- panel texts -->
<g>
<text x="1954" y="437" class="p" textLength="58" lengthAdjust="spacingAndGlyphs">FL_Untitled_B</text><text x="1956" y="452" class="pc">Mute</text><text x="2004" y="452" class="pc">Solo</text><text x="1943" y="471" class="p" font-weight="bold">-</text><text x="2011" y="471" class="p">+</text><text x="1944" y="501" class="p" font-weight="bold">L</text><text x="2011" y="501" class="p" font-weight="bold">R</text><text x="1936" y="531" class="p" textLength="68" lengthAdjust="spacingAndGlyphs">Mono, 48000Hz</text><text x="1936" y="543" class="p" textLength="47" lengthAdjust="spacingAndGlyphs">32-bit float</text><text x="1980" y="562" class="pc">Select</text><text x="2049" y="435" class="sb">1.0</text><text x="2049" y="464" class="sc">0.5</text><text x="2049" y="500" class="sb">0.0</text><text x="2049" y="535" class="sc">-0.5</text><text x="2049" y="564" class="sb">-1.0</text>
<text x="1954" y="587" class="p" textLength="58" lengthAdjust="spacingAndGlyphs">FL_Untitled_B</text><text x="1956" y="602" class="pc">Mute</text><text x="2004" y="602" class="pc">Solo</text><text x="1943" y="621" class="p" font-weight="bold">-</text><text x="2011" y="621" class="p">+</text><text x="1944" y="651" class="p" font-weight="bold">L</text><text x="2011" y="651" class="p" font-weight="bold">R</text><text x="1936" y="681" class="p" textLength="68" lengthAdjust="spacingAndGlyphs">Mono, 48000Hz</text><text x="1936" y="693" class="p" textLength="47" lengthAdjust="spacingAndGlyphs">32-bit float</text><text x="1980" y="712" class="pc">Select</text><text x="2049" y="585" class="sb">1.0</text><text x="2049" y="614" class="sc">0.5</text><text x="2049" y="650" class="sb">0.0</text><text x="2049" y="685" class="sc">-0.5</text><text x="2049" y="714" class="sb">-1.0</text>
<text x="1954" y="737" class="p" textLength="58" lengthAdjust="spacingAndGlyphs">FL_Untitled_B</text><text x="1956" y="752" class="pc">Mute</text><text x="2004" y="752" class="pc">Solo</text><text x="1943" y="771" class="p" font-weight="bold">-</text><text x="2011" y="771" class="p">+</text><text x="1944" y="801" class="p" font-weight="bold">L</text><text x="2011" y="801" class="p" font-weight="bold">R</text><text x="1936" y="831" class="p" textLength="68" lengthAdjust="spacingAndGlyphs">Mono, 48000Hz</text><text x="1936" y="843" class="p" textLength="47" lengthAdjust="spacingAndGlyphs">32-bit float</text><text x="1980" y="862" class="pc">Select</text><text x="2049" y="735" class="sb">1.0</text><text x="2049" y="764" class="sc">0.5</text><text x="2049" y="800" class="sb">0.0</text><text x="2049" y="835" class="sc">-0.5</text><text x="2049" y="864" class="sb">-1.0</text>
<text x="1954" y="887" class="p" textLength="58" lengthAdjust="spacingAndGlyphs">FL_Untitled_B</text><text x="1956" y="902" class="pc">Mute</text><text x="2004" y="902" class="pc">Solo</text><text x="1943" y="921" class="p" font-weight="bold">-</text><text x="2011" y="921" class="p">+</text><text x="1944" y="951" class="p" font-weight="bold">L</text><text x="2011" y="951" class="p" font-weight="bold">R</text><text x="1936" y="981" class="p" textLength="68" lengthAdjust="spacingAndGlyphs">Mono, 48000Hz</text><text x="1936" y="993" class="p" textLength="47" lengthAdjust="spacingAndGlyphs">32-bit float</text><text x="1980" y="1012" class="pc">Select</text><text x="2049" y="885" class="sb">1.0</text><text x="2049" y="914" class="sc">0.5</text><text x="2049" y="950" class="sb">0.0</text><text x="2049" y="985" class="sc">-0.5</text><text x="2049" y="1014" class="sb">-1.0</text>
<text x="1954" y="1037" class="p" textLength="58" lengthAdjust="spacingAndGlyphs">FL_Untitled_B</text><text x="1956" y="1052" class="pc">Mute</text><text x="2004" y="1052" class="pc">Solo</text><text x="1943" y="1071" class="p" font-weight="bold">-</text><text x="2011" y="1071" class="p">+</text><text x="1944" y="1101" class="p" font-weight="bold">L</text><text x="2011" y="1101" class="p" font-weight="bold">R</text><text x="1936" y="1131" class="p" textLength="68" lengthAdjust="spacingAndGlyphs">Mono, 48000Hz</text><text x="1936" y="1143" class="p" textLength="47" lengthAdjust="spacingAndGlyphs">32-bit float</text><text x="1980" y="1162" class="pc">Select</text><text x="2049" y="1035" class="sb">1.0</text><text x="2049" y="1064" class="sc">0.5</text><text x="2049" y="1100" class="sb">0.0</text><text x="2049" y="1135" class="sc">-0.5</text><text x="2049" y="1164" class="sb">-1.0</text>
<text x="1954" y="1187" class="p" textLength="58" lengthAdjust="spacingAndGlyphs">FL_Untitled_B</text><text x="1956" y="1202" class="pc">Mute</text><text x="2004" y="1202" class="pc">Solo</text><text x="1943" y="1221" class="p" font-weight="bold">-</text><text x="2011" y="1221" class="p">+</text><text x="1944" y="1251" class="p" font-weight="bold">L</text><text x="2011" y="1251" class="p" font-weight="bold">R</text><text x="1936" y="1281" class="p" textLength="68" lengthAdjust="spacingAndGlyphs">Mono, 48000Hz</text><text x="1936" y="1293" class="p" textLength="47" lengthAdjust="spacingAndGlyphs">32-bit float</text><text x="1980" y="1312" class="pc">Select</text><text x="2049" y="1185" class="sb">1.0</text><text x="2049" y="1214" class="sc">0.5</text><text x="2049" y="1250" class="sb">0.0</text><text x="2049" y="1285" class="sc">-0.5</text><text x="2049" y="1314" class="sb">-1.0</text>
<text x="1954" y="1337" class="p" textLength="58" lengthAdjust="spacingAndGlyphs">FL_Untitled_B</text><text x="1956" y="1352" class="pc">Mute</text><text x="2004" y="1352" class="pc">Solo</text><text x="1943" y="1371" class="p" font-weight="bold">-</text><text x="2011" y="1371" class="p">+</text><text x="1944" y="1401" class="p" font-weight="bold">L</text><text x="2011" y="1401" class="p" font-weight="bold">R</text><text x="1936" y="1431" class="p" textLength="68" lengthAdjust="spacingAndGlyphs">Mono, 48000Hz</text><text x="1936" y="1443" class="p" textLength="47" lengthAdjust="spacingAndGlyphs">32-bit float</text><text x="1980" y="1462" class="pc">Select</text><text x="2049" y="1335" class="sb">1.0</text><text x="2049" y="1364" class="sc">0.5</text><text x="2049" y="1400" class="sb">0.0</text><text x="2049" y="1435" class="sc">-0.5</text><text x="2049" y="1464" class="sb">-1.0</text>
<text x="1954" y="1487" class="p" textLength="58" lengthAdjust="spacingAndGlyphs">FL_Untitled_B</text><text x="1956" y="1502" class="pc">Mute</text><text x="2004" y="1502" class="pc">Solo</text><text x="1943" y="1521" class="p" font-weight="bold">-</text><text x="2011" y="1521" class="p">+</text><text x="1944" y="1551" class="p" font-weight="bold">L</text><text x="2011" y="1551" class="p" font-weight="bold">R</text><text x="1936" y="1581" class="p" textLength="68" lengthAdjust="spacingAndGlyphs">Mono, 48000Hz</text><text x="1936" y="1593" class="p" textLength="47" lengthAdjust="spacingAndGlyphs">32-bit float</text><text x="1980" y="1612" class="pc">Select</text><text x="2049" y="1485" class="sb">1.0</text><text x="2049" y="1514" class="sc">0.5</text><text x="2049" y="1550" class="sb">0.0</text><text x="2049" y="1585" class="sc">-0.5</text><text x="2049" y="1614" class="sb">-1.0</text>
</g>

<!-- Audacity bottom -->
<rect x="1928" y="1965" width="1716" height="16" fill="#2d2d2d"/>
<rect x="2069" y="1971" width="600" height="3" fill="#8a8a8a"/>
<rect x="1928" y="1981" width="1716" height="56" fill="#f8f9ff"/>
<rect x="1928" y="2037" width="1716" height="29" fill="#2d2d2d"/>
<text x="1933" y="2059" font-size="13.500" fill="#e0e0e0">Stopped.</text>
<path d="M1933 1984v50M1938 1984v50" stroke="#c8c8c8" stroke-dasharray="2 2"/>
<text x="1945" y="1998" class="mb">Project Rate (Hz)</text>
<text x="2089" y="1998" class="mb">Snap-To</text>
<path d="M2082.500 1987v17M2082.500 2016v17M2187.500 1987v17M2187.500 2016v17" stroke="#333"/>
<rect x="1949" y="2010" width="122" height="26" rx="2" fill="#1c1c1c"/><rect x="2046" y="2010" width="25" height="26" fill="#333"/>
<text x="1954" y="2028" class="dd">48000</text>
<rect x="2093" y="2010" width="84" height="26" rx="2" fill="#333"/><text x="2100" y="2028" class="dd">Off</text>
<rect x="2198" y="1982" width="284" height="26" rx="2" fill="#333"/><text x="2205" y="2000" class="dd" style="letter-spacing:.5px">Start and End of Selection</text>
<path d="M2059 2016v14m-4-5l4 5 4-5M2164 2016v14m-4-5l4 5 4-5M2469 1988v14m-4-5l4 5 4-5" fill="none" stroke="#e8e8e8" stroke-width="2"/>
<rect x="2194.500" y="2010.500" width="143" height="21" rx="2" fill="#b8c0cc" stroke="#666"/>
<rect x="2343.500" y="2010.500" width="143" height="21" rx="2" fill="#b8c0cc" stroke="#666"/>
<g fill="#cdcdcd"><rect x="2196" y="2012" width="22" height="18"/><rect x="2232" y="2012" width="21" height="18"/><rect x="2266" y="2012" width="21" height="18"/><rect x="2291" y="2012" width="34" height="18"/><rect x="2345" y="2012" width="22" height="18"/><rect x="2381" y="2012" width="21" height="18"/><rect x="2415" y="2012" width="21" height="18"/><rect x="2440" y="2012" width="34" height="18"/></g>
<text class="d1" y="2025" x="2198 2210 2222 2235 2246 2256 2270 2281 2289 2293 2304 2315 2326">00h00m00.000s</text>
<text class="d1" y="2025" x="2347 2359 2371 2384 2395 2405 2419 2430 2438 2442 2453 2464 2475">00h00m01.529s</text>
<path d="M2329 2016h7l-3.500 5zM2478 2016h7l-3.500 5z" fill="#000"/>
<path d="M2493.500 1984v50M2497.500 1984v50M2742.500 1984v50M2746.500 1984v50" stroke="#c8c8c8"/>
<rect x="2505" y="1988" width="227" height="41" rx="3" fill="#b8c0cc" stroke="#777"/>
<g fill="#cdcdcd"><rect x="2513" y="1990" width="39" height="37"/><rect x="2579" y="1990" width="46" height="37"/><rect x="2659" y="1990" width="46" height="37"/></g>
<text font-size="25" fill="#1414b4" y="2020" x="2513 2534 2558 2584 2605 2633 2663 2686 2710">00h00m00s</text>
<rect x="2725" y="1990" width="6" height="37" fill="#f0f0f0"/>
<path d="M2725 2006h7l-3.500 4z" fill="#000"/>
<path d="M3610 2063l24-22M3618 2063l16-15M3626 2063l8-7" stroke="#555"/>
</svg>
</body></html>
